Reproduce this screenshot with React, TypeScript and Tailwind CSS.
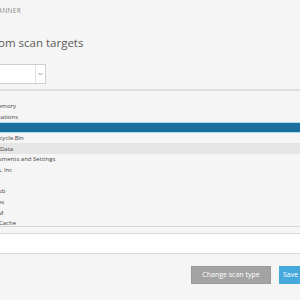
import React from "react";

const rows: { t: string; sel?: boolean; gray?: boolean; pl?: number }[] = [
  { t: "emory" },
  { t: "cations" },
  { t: "", sel: true },
  { t: "cycle.Bin", pl: 1.5 },
  { t: "Data", gray: true, pl: 2 },
  { t: "uments and Settings" },
  { t: "s, Inc" },
  { t: "" },
  { t: "ub" },
  { t: "es" },
  { t: "M" },
  { t: "Cache", pl: 1 },
];

export default function App() {
  return (
    <div className="w-[300px] h-[300px] overflow-hidden bg-[#f5f5f5] flex flex-col text-[#444] font-['Open_Sans',sans-serif]">
      <div className="h-[22px] shrink-0 flex items-center text-[6.5px] tracking-[0.3px] text-[#8a8a8a] -ml-[2px]">
        ANNER
      </div>
      <div className="h-[42px] shrink-0 flex items-center text-[11.5px] text-[#5a5a5a] leading-none -ml-[2px]">
        om scan targets
      </div>
      <div className="h-[20px] shrink-0 flex">
        <div className="w-[46px] h-full bg-white border border-[#cfcfcf] border-l-0 flex justify-end">
          <div className="w-[10px] h-full border-l border-[#e2e2e2] flex items-center justify-center">
            <svg width="5" height="4" viewBox="0 0 5 4">
              <path d="M0.5 1 L2.5 3 L4.5 1" fill="none" stroke="#888" strokeWidth="0.8" />
            </svg>
          </div>
        </div>
      </div>
      <div className="h-[2px] mt-[5px] shrink-0 bg-[#dedede]" />
      <div className="h-[136px] shrink-0 overflow-hidden pt-[9.7px] border-b border-[#d6d6d6] flex flex-col">
        {rows.map((r, i) => (
          <div
            key={i}
            className={
              "h-[10.67px] shrink-0 flex items-center text-[6px] leading-none whitespace-nowrap " +
              (r.sel
                ? "bg-[#1b6f9e] border-y border-[#a9dcee]"
                : r.gray
                ? "bg-[#e5e5e5]"
                : "")
            }
          >
            <span style={{ marginLeft: (r.pl ?? 0) - 2 }}>{r.t}</span>
          </div>
        ))}
      </div>
      <div className="h-[21px] mt-[6px] shrink-0 bg-white border-y border-[#d8d8d8]" />
      <div className="mt-[12px] h-[18px] shrink-0 flex gap-[8px] pl-[191px]">
        <div className="w-[80px] shrink-0 h-full bg-[#a3a3a3] border border-[#999] flex items-center justify-center text-white text-[7px] whitespace-nowrap">
          Change scan type
        </div>
        <div className="w-[60px] shrink-0 h-full bg-[#45a9dc] flex items-center pl-[4px] text-white text-[7px]">
          Save
        </div>
      </div>
    </div>
  );
}
